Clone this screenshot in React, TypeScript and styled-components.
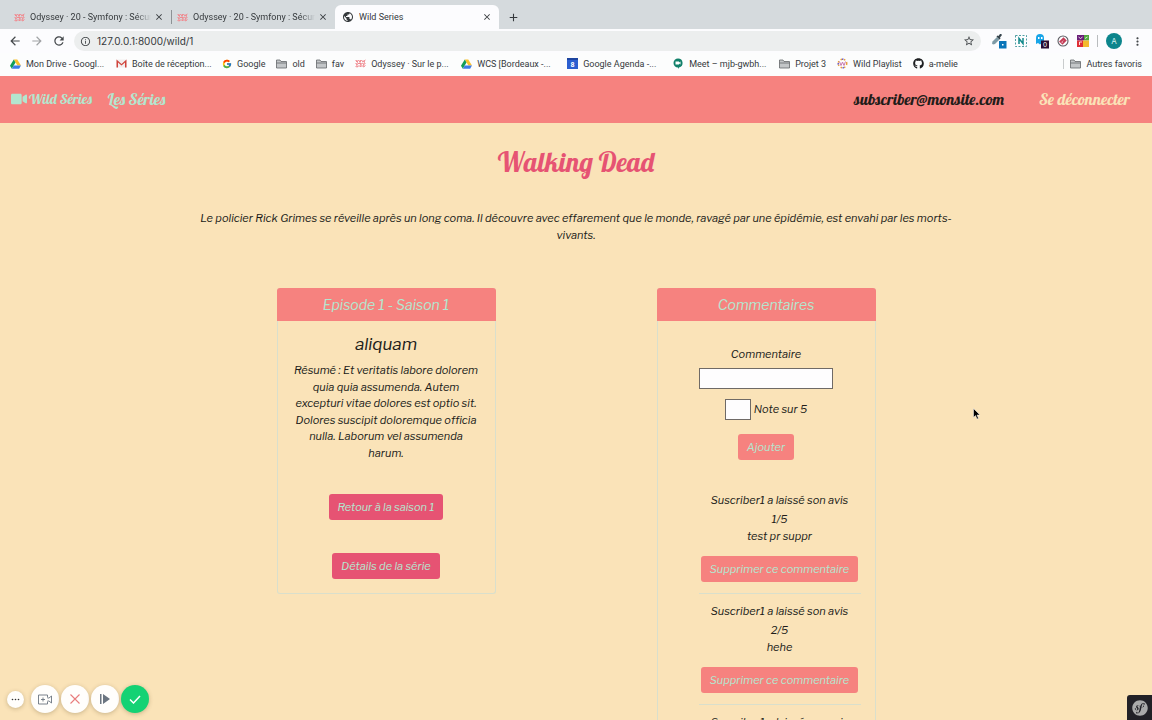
import React from "react";
import styled, { createGlobalStyle, css } from "styled-components";
import {
  MdAdd,
  MdArrowBack,
  MdArrowForward,
  MdClose,
  MdInfoOutline,
  MdMoreVert,
  MdPublic,
  MdRefresh,
  MdStarBorder,
} from "react-icons/md";
import { FaGithub, FaSymfony, FaVideo } from "react-icons/fa";
import { FcGoogle } from "react-icons/fc";

const color = {
  sand: "#fae3b8",
  coral: "#f6827f",
  rose: "#e65373",
  mint: "#b3e6cf",
  ink: "#211c19",
  line: "#d9dfcc",
};

const GlobalStyle = createGlobalStyle`
  *, *::before, *::after { box-sizing: border-box; }
  body {
    margin: 0;
    background: ${color.sand};
    font-family: "Libre Franklin", Inter, "Liberation Sans", sans-serif;
  }
  button, input { font: inherit; }
  button { border: 0; padding: 0; background: none; color: inherit; cursor: pointer; }
  a { color: inherit; text-decoration: none; }
  svg { display: block; flex: none; }
`;

const Screen = styled.div`
  display: flex;
  flex-direction: column;
  height: 100vh;
  overflow: hidden;
`;

/* ---------- Browser window ---------- */

const TabStrip = styled.div`
  display: flex;
  flex: none;
  align-items: flex-end;
  height: 29px;
  padding-left: 7px;
  background: #d5dadd;
  color: #35393c;
  font-family: Roboto, sans-serif;
  font-size: 9px;
`;

const Tab = styled.div<{ $active?: boolean }>`
  display: flex;
  align-items: center;
  gap: 5px;
  width: 164px;
  height: 24px;
  padding: 0 5px 0 7px;
  border-radius: 6px 6px 0 0;
  ${(p) =>
    p.$active
      ? css`
          background: #fcfcfe;
        `
      : css`
          & + &::before {
            content: "";
            width: 1px;
            height: 14px;
            margin-left: -7px;
            background: #8d9295;
          }
        `}
`;

const TabTitle = styled.span<{ $fade?: boolean }>`
  flex: 1;
  margin-right: -4px;
  overflow: hidden;
  white-space: nowrap;
  ${(p) =>
    p.$fade &&
    css`
      mask-image: linear-gradient(to right, #000 88%, transparent);
    `}
`;

const NewTab = styled.button`
  display: grid;
  place-items: center;
  width: 28px;
  height: 24px;
`;

const Toolbar = styled.div`
  display: flex;
  flex: none;
  align-items: center;
  gap: 8px;
  height: 24px;
  padding: 0 8px;
  background: #fcfcfe;
  color: #45494c;
  font-family: Inter, sans-serif;
`;

const ToolButton = styled.button<{ $dim?: boolean }>`
  display: grid;
  place-items: center;
  width: 14px;
  height: 14px;
  opacity: ${(p) => (p.$dim ? 0.5 : 1)};
`;

const AddressBar = styled.div`
  display: flex;
  flex: 1;
  align-items: center;
  gap: 6px;
  height: 20px;
  padding: 0 5px 0 6px;
  border-radius: 10px;
  background: #eceeee;
`;

const AddressInput = styled.input`
  flex: 1;
  min-width: 0;
  padding: 0;
  border: 0;
  outline: 0;
  background: none;
  color: #35393c;
  font-size: 10px;
`;

const Extensions = styled.div`
  display: flex;
  align-items: center;
  gap: 8px;
  padding-left: 2px;
`;

const Divider = styled.span`
  width: 1px;
  height: 12px;
  background: #b9bcbe;
`;

const Avatar = styled.button`
  width: 16px;
  height: 16px;
  border-radius: 50%;
  background: #0c858c;
  color: #d6f2f2;
  font-size: 8px;
`;

const Bookmarks = styled.nav`
  display: flex;
  flex: none;
  align-items: center;
  height: 23px;
  padding: 0 10px 2px;
  background: #fcfdfd;
  color: #35393c;
  font-family: Roboto, sans-serif;
  font-size: 9px;
`;

const Bookmark = styled.a<{ $wide?: boolean; $last?: boolean }>`
  display: flex;
  flex: none;
  align-items: center;
  gap: 5px;
  padding-right: ${(p) => (p.$last ? 0 : 11)}px;
  white-space: nowrap;
  ${(p) =>
    p.$wide &&
    css`
      width: 106px;
      padding-right: 0;
    `}
  ${(p) =>
    p.$last &&
    css`
      margin-left: auto;
      padding-left: 6px;
      border-left: 1px solid #c9cccd;
    `}
`;

/* ---------- Site ---------- */

const script = css`
  font-family: Lobster, "Liberation Serif", serif;
  font-style: normal;
  font-weight: 400;
`;

const SiteNav = styled.nav`
  display: flex;
  flex: none;
  align-items: center;
  gap: 16px;
  height: 47px;
  padding: 0 22px 1px 11px;
  background: ${color.coral};
  ${script}
  font-size: 16px;
`;

const Brand = styled.a`
  display: flex;
  align-items: center;
  gap: 2px;
  color: ${color.mint};
  font-size: 14px;
`;

const NavLink = styled.a<{ $tone: string }>`
  color: ${(p) => p.$tone};
`;

const Account = styled.div`
  display: flex;
  gap: 35px;
  margin-left: auto;
`;

const Main = styled.main`
  flex: 1;
  min-height: 0;
  overflow: hidden;
  color: ${color.ink};
  font-size: 11px;
  font-style: italic;
  line-height: 1.5;
  text-align: center;
`;

const Container = styled.div`
  max-width: 760px;
  margin: 0 auto;
  padding-top: 21px;
`;

const Title = styled.h1`
  margin: 0;
  color: ${color.rose};
  ${script}
  font-size: 27px;
  line-height: 36px;
`;

const Summary = styled.p`
  margin: 30px 0 45px;
`;

const Columns = styled.div`
  display: grid;
  grid-template-columns: 1fr 1fr;
  align-items: start;
  justify-items: center;
`;

const Card = styled.section`
  width: 219px;
  border: 1px solid ${color.line};
  border-top: 0;
  border-radius: 3px;
`;

const CardHeader = styled.h2`
  margin: 0 -1px;
  border-radius: 3px 3px 0 0;
  background: ${color.coral};
  color: ${color.mint};
  font-size: 14px;
  font-weight: 400;
  line-height: 33px;
`;

const CardBody = styled.div`
  display: flex;
  flex-direction: column;
  align-items: center;
  padding: 13px 14px 14px;
`;

const EpisodeTitle = styled.h3`
  margin: 0 0 7px;
  font-size: 17px;
  font-weight: 400;
  line-height: 21px;
`;

const Text = styled.p`
  margin: 0;
`;

const buttonLook = css<{ $tone: string }>`
  height: 26px;
  padding: 0 9px;
  border-radius: 3px;
  background: ${(p) => p.$tone};
  color: ${color.mint};
  font-style: italic;
  line-height: 26px;
`;

const LinkButton = styled.a<{ $tone: string }>`
  ${buttonLook}
  margin-top: 33px;
`;

const Button = styled.button<{ $tone: string }>`
  ${buttonLook}
`;

const CommentForm = styled.form`
  display: flex;
  flex-direction: column;
  align-items: center;
  padding-top: 12px;
`;

const Field = styled.input<{ $width: number }>`
  width: ${(p) => p.$width}px;
  height: 21px;
  padding: 1px 2px;
  border: 1px solid #6f6a66;
  background: #fefdfe;
`;

const CommentLabel = styled.label`
  margin-bottom: 5px;
`;

const NoteRow = styled.div`
  display: flex;
  align-items: center;
  gap: 3px;
  margin: 10px 0 14px;
`;

const CommentList = styled.ul`
  align-self: stretch;
  margin: 32px 0 0;
  padding: 0 0 0 27px;
  list-style: none;
`;

const Comment = styled.li`
  display: flex;
  flex-direction: column;
  align-items: center;
  height: 111px;
`;

const Author = styled.h4`
  margin: 0 0 3px;
  font-size: 11px;
  font-weight: 400;
`;

const Rule = styled.hr`
  align-self: stretch;
  height: 1px;
  margin: 11px 0 0;
  border: 0;
  background: ${color.line};
`;

const DeleteButton = styled(Button)`
  margin-top: 12px;
`;

/* ---------- Overlays ---------- */

const Recorder = styled.div`
  position: fixed;
  bottom: 7px;
  left: 7px;
  display: flex;
  align-items: center;
  gap: 2px;
`;

const RoundButton = styled.button<{ $small?: boolean; $go?: boolean }>`
  display: grid;
  place-items: center;
  width: ${(p) => (p.$small ? 17 : 28)}px;
  height: ${(p) => (p.$small ? 17 : 28)}px;
  margin-right: ${(p) => (p.$small ? 5 : 0)}px;
  border-radius: 50%;
  background: ${(p) => (p.$go ? "#14d274" : "#fffefc")};
  box-shadow: 0 1px 4px rgba(90, 70, 30, 0.3);
`;

const DebugBadge = styled.button`
  position: fixed;
  right: 0;
  bottom: 0;
  display: grid;
  place-items: center;
  width: 25px;
  height: 25px;
  border-radius: 3px 0 0 0;
  background: #222127;
  color: #aaaaaa;
`;

const Pointer = styled.svg`
  position: fixed;
  top: 408px;
  left: 973px;
`;

/* ---------- Icons ---------- */

const OdysseyIcon = () => (
  <svg width="11" height="9" viewBox="0 0 22 18" fill="none" stroke="#f08a90" strokeWidth="2">
    <path d="M1 3l3 3 3-4 3 4 3-4 3 4 5-4M1 9l4 2 3-3 3 3 4-3 2 3 4-2M1 15l4 1 3-3 3 3 3-3 3 3 4-3M3 2l2 5-2 4 2 5M11 2l-1 5 2 4-1 5M18 2l1 5-2 4 1 5" />
  </svg>
);

const DriveIcon = () => (
  <svg width="11" height="10" viewBox="0 0 22 20">
    <path d="M7.500 1h7L22 13h-7.200z" fill="#fbc02d" />
    <path d="M7.500 1L0 13.500 3.600 19.500 11 7z" fill="#139c58" />
    <path d="M7.500 13H22l-3.700 6.500H3.600z" fill="#3f7be8" />
  </svg>
);

const GmailIcon = () => (
  <svg width="11" height="9" viewBox="0 0 22 18">
    <path d="M1 1h20v16H1z" fill="#f2eeee" />
    <path d="M1 17V1l10 9 10-9v16h-3V7l-7 6-7-6v10z" fill="#d0443c" />
  </svg>
);

const FolderIcon = () => (
  <svg width="11" height="10" viewBox="0 0 22 20" fill="#c3c6c8" stroke="#63676a" strokeWidth="1.600">
    <path d="M1 18V2h7l2 3h11v13z" />
    <path d="M1 8h20" />
  </svg>
);

const CalendarIcon = () => (
  <svg width="11" height="11" viewBox="0 0 22 22">
    <path d="M0 0h22v22H0z" fill="#2b5fd0" />
    <path d="M0 0h22v4H0z" fill="#1d45a0" />
    <text x="11" y="18" textAnchor="middle" fill="#fff" fontSize="14" fontWeight="700">8</text>
  </svg>
);

const MeetIcon = () => (
  <svg width="11" height="11" viewBox="0 0 22 22">
    <path d="M10 1a9 9 0 0 1 2 17.800L10 22v-3A9 9 0 0 1 10 1z" fill="#12806a" />
    <path d="M5 7h7v2l3-2v6l-3-2v2H5z" fill="#fff" />
  </svg>
);

const PlaylistIcon = () => (
  <svg width="11" height="11" viewBox="0 0 22 22" fill="none" strokeWidth="3">
    <circle cx="11" cy="11" r="8.500" stroke="#e6a03e" strokeDasharray="3 4" />
    <circle cx="11" cy="11" r="8.500" stroke="#6a5acb" strokeDasharray="3 11" strokeDashoffset="4" />
    <path d="M5 7l3 8 3-7 3 7 3-8" stroke="#c97ab0" strokeWidth="2" />
  </svg>
);

const PickerIcon = () => (
  <svg width="16" height="16" viewBox="0 0 32 32">
    <path d="M2 21l1-4 9-9 5 5-9 9-4 1z" fill="#7f9ba6" />
    <path d="M11 7l2-2 2 1 3-4q3-1 4 2l-4 5 1 2-2 2z" fill="#36444c" />
    <path d="M16 16h15v15H16z" fill="#0874b8" />
    <path d="M22 22h3v3h-3z" fill="#fff" />
  </svg>
);

const NimbusIcon = () => (
  <svg width="12" height="12" viewBox="0 0 24 24" fill="none">
    <path d="M1 1h22v22H1z" stroke="#157f84" strokeWidth="1.500" strokeDasharray="4 3" />
    <path d="M8 18V7l8 10V6" stroke="#12898b" strokeWidth="3" />
  </svg>
);

const GhostIcon = () => (
  <svg width="14" height="16" viewBox="0 0 28 32">
    <path d="M2 22V10q0-8 8-8t8 8v12l-4-2-4 3-4-3z" fill="#18a5e8" />
    <path d="M6 8h3v4H6zM12 8h3v4h-3z" fill="#fff" />
    <path d="M12 15h16v16H12z" fill="#2a0d33" />
    <text x="20" y="28" textAnchor="middle" fill="#fff" fontSize="13">0</text>
  </svg>
);

const SwirlIcon = () => (
  <svg width="12" height="12" viewBox="0 0 24 24" fill="none" strokeWidth="2.200">
    <circle cx="12" cy="12" r="10" stroke="#5c5c62" />
    <path d="M5 14l8-8 5 5-7 7-4-4 6-5 2 2-4 4" stroke="#c43c56" />
  </svg>
);

const BlocksIcon = () => (
  <svg width="12" height="12" viewBox="0 0 24 24">
    <path d="M0 0h14v11H0z" fill="#6a1e78" />
    <path d="M14 0h10v11H14z" fill="#53a93f" />
    <path d="M0 11h12v13H0z" fill="#df2f36" />
    <path d="M12 11h12v13H12z" fill="#f4ba2d" />
    <path d="M3 4l4 3 4-3M16 7l5-3M5 20v-6h5" stroke="#fff" strokeWidth="1.600" fill="none" />
  </svg>
);

const DotsIcon = () => (
  <svg width="9" height="3" viewBox="0 0 9 3" fill="#333">
    <circle cx="1.500" cy="1.500" r="0.800" />
    <circle cx="4.500" cy="1.500" r="0.800" />
    <circle cx="7.500" cy="1.500" r="0.800" />
  </svg>
);

const AddCameraIcon = () => (
  <svg width="14" height="11" viewBox="0 0 28 22" fill="none" stroke="#6b7580" strokeWidth="1.800">
    <path d="M19 7V2H1v18h18v-5M19 8h3l5-4v14l-5-4h-3M10 7v8M6 11h8" />
  </svg>
);

const CrossIcon = () => (
  <svg width="10" height="10" viewBox="0 0 20 20" stroke="#e87c7c" strokeWidth="2.200">
    <path d="M1 1l18 18M19 1L1 19" />
  </svg>
);

const ResumeIcon = () => (
  <svg width="10" height="10" viewBox="0 0 20 20" fill="#6b7580">
    <path d="M0 0h3v20H0zM6 0l14 10L6 20z" />
  </svg>
);

const CheckIcon = () => (
  <svg width="12" height="9" viewBox="0 0 24 18" fill="none" stroke="#fff" strokeWidth="3">
    <path d="M2 9l7 7L22 2" />
  </svg>
);

/* ---------- Data ---------- */

const bookmarks = [
  { label: "Mon Drive - Googl...", icon: <DriveIcon />, wide: true },
  { label: "Boîte de réception...", icon: <GmailIcon />, wide: true },
  { label: "Google", icon: <FcGoogle size={10} /> },
  { label: "old", icon: <FolderIcon /> },
  { label: "fav", icon: <FolderIcon /> },
  { label: "Odyssey · Sur le p...", icon: <OdysseyIcon />, wide: true },
  { label: "WCS [Bordeaux -...", icon: <DriveIcon />, wide: true },
  { label: "Google Agenda -...", icon: <CalendarIcon />, wide: true },
  { label: "Meet – mjb-gwbh...", icon: <MeetIcon />, wide: true },
  { label: "Projet 3", icon: <FolderIcon /> },
  { label: "Wild Playlist", icon: <PlaylistIcon /> },
  { label: "a-melie", icon: <FaGithub size={11} color="#1d1f21" /> },
];

const comments = [
  { id: 1, note: 1, text: "test pr suppr" },
  { id: 2, note: 2, text: "hehe" },
  { id: 3, note: 3, text: "hehe" },
];

const Browser = () => (
  <>
    <TabStrip>
      {[1, 2].map((n) => (
        <Tab key={n}>
          <OdysseyIcon />
          <TabTitle $fade>Odyssey · 20 - Symfony : Sécurité</TabTitle>
          <ToolButton aria-label="Fermer l'onglet">
            <MdClose size={10} />
          </ToolButton>
        </Tab>
      ))}
      <Tab $active>
        <MdPublic size={12} color="#35393c" />
        <TabTitle>Wild Series</TabTitle>
        <ToolButton aria-label="Fermer l'onglet">
          <MdClose size={10} />
        </ToolButton>
      </Tab>
      <NewTab aria-label="Nouvel onglet">
        <MdAdd size={13} />
      </NewTab>
    </TabStrip>
    <Toolbar>
      <ToolButton aria-label="Précédent">
        <MdArrowBack size={14} />
      </ToolButton>
      <ToolButton aria-label="Suivant" $dim>
        <MdArrowForward size={14} />
      </ToolButton>
      <ToolButton aria-label="Actualiser">
        <MdRefresh size={14} />
      </ToolButton>
      <AddressBar>
        <MdInfoOutline size={11} />
        <AddressInput aria-label="Adresse" defaultValue="127.0.0.1:8000/wild/1" />
        <ToolButton aria-label="Ajouter aux favoris">
          <MdStarBorder size={12} />
        </ToolButton>
      </AddressBar>
      <Extensions>
        <PickerIcon />
        <NimbusIcon />
        <GhostIcon />
        <SwirlIcon />
        <BlocksIcon />
        <Divider />
        <Avatar>A</Avatar>
        <ToolButton aria-label="Menu">
          <MdMoreVert size={13} />
        </ToolButton>
      </Extensions>
    </Toolbar>
    <Bookmarks>
      {bookmarks.map((b) => (
        <Bookmark key={b.label} href="#" $wide={b.wide}>
          {b.icon}
          {b.label}
        </Bookmark>
      ))}
      <Bookmark href="#" $last>
        <FolderIcon />
        Autres favoris
      </Bookmark>
    </Bookmarks>
  </>
);

export default function App() {
  return (
    <Screen>
      <GlobalStyle />
      <Browser />
      <SiteNav>
        <Brand href="#">
          <FaVideo size={16} />
          Wild Séries
        </Brand>
        <NavLink href="#" $tone={color.mint}>
          Les Séries
        </NavLink>
        <Account>
          <NavLink href="#" $tone={color.ink}>
            subscriber@monsite.com
          </NavLink>
          <NavLink href="#" $tone={color.sand}>
            Se déconnecter
          </NavLink>
        </Account>
      </SiteNav>
      <Main>
        <Container>
          <Title>Walking Dead</Title>
          <Summary>
            Le policier Rick Grimes se réveille après un long coma. Il découvre avec effarement que
            le monde, ravagé par une épidémie, est envahi par les morts-vivants.
          </Summary>
          <Columns>
            <Card>
              <CardHeader>Episode 1 - Saison 1</CardHeader>
              <CardBody>
                <EpisodeTitle>aliquam</EpisodeTitle>
                <Text>
                  Résumé : Et veritatis labore dolorem quia quia assumenda. Autem excepturi vitae
                  dolores est optio sit. Dolores suscipit doloremque officia nulla. Laborum vel
                  assumenda harum.
                </Text>
                <LinkButton href="#" $tone={color.rose}>
                  Retour à la saison 1
                </LinkButton>
                <LinkButton href="#" $tone={color.rose}>
                  Détails de la série
                </LinkButton>
              </CardBody>
            </Card>
            <Card>
              <CardHeader>Commentaires</CardHeader>
              <CardBody>
                <CommentForm>
                  <CommentLabel htmlFor="comment">Commentaire</CommentLabel>
                  <Field id="comment" type="text" $width={134} />
                  <NoteRow>
                    <Field id="note" type="text" $width={26} />
                    <label htmlFor="note">Note sur 5</label>
                  </NoteRow>
                  <Button type="button" $tone={color.coral}>
                    Ajouter
                  </Button>
                </CommentForm>
                <CommentList>
                  {comments.map((c) => (
                    <Comment key={c.id}>
                      <Author>Suscriber1 a laissé son avis</Author>
                      <Text>{c.note}/5</Text>
                      <Text>{c.text}</Text>
                      <DeleteButton type="button" $tone={color.coral}>
                        Supprimer ce commentaire
                      </DeleteButton>
                      <Rule />
                    </Comment>
                  ))}
                </CommentList>
              </CardBody>
            </Card>
          </Columns>
        </Container>
      </Main>
      <Recorder>
        <RoundButton $small aria-label="Options">
          <DotsIcon />
        </RoundButton>
        <RoundButton aria-label="Ajouter une séquence">
          <AddCameraIcon />
        </RoundButton>
        <RoundButton aria-label="Annuler">
          <CrossIcon />
        </RoundButton>
        <RoundButton aria-label="Reprendre">
          <ResumeIcon />
        </RoundButton>
        <RoundButton $go aria-label="Terminer">
          <CheckIcon />
        </RoundButton>
      </Recorder>
      <DebugBadge aria-label="Symfony">
        <FaSymfony size={16} />
      </DebugBadge>
      <Pointer width="7" height="12" viewBox="0 0 14 24">
        <path d="M1 1v18l4-4 3 7 3-1-3-7h6z" fill="#000" stroke="#fff" strokeWidth="1" />
      </Pointer>
    </Screen>
  );
}
